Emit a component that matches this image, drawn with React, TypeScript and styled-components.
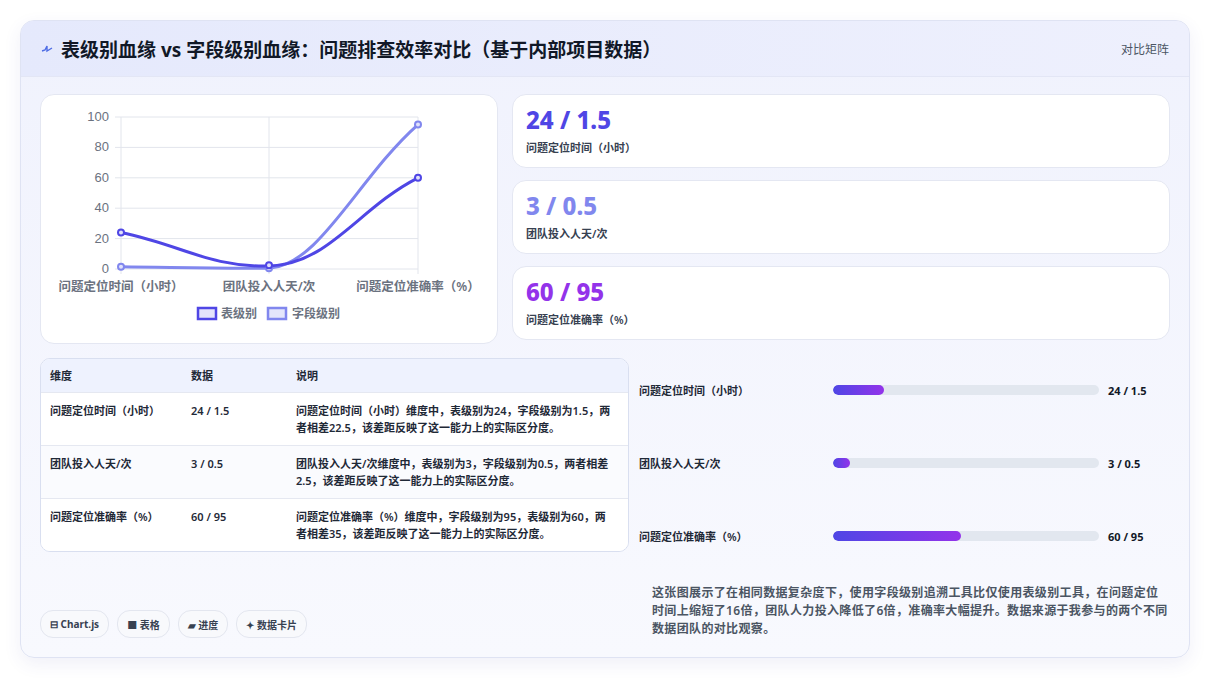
import React from 'react';
import styled, { createGlobalStyle } from 'styled-components';

const Global = createGlobalStyle`
  body { margin: 0; background: #fff; font-family: "Noto Sans", "Noto Sans CJK SC", sans-serif; }
`;

const Page = styled.div`
  padding: 20px 20px 22px 20px;
  background: #fff;
`;

const Card = styled.div`
  border: 1px solid #dfe3f3;
  border-radius: 14px;
  background: linear-gradient(180deg, #f0f2fd 0%, #f8f9fe 100%);
  box-shadow: 0 6px 18px rgba(60, 70, 160, 0.08);
  overflow: hidden;
  height: 638px;
  box-sizing: border-box;
`;

const Header = styled.div`
  height: 55px;
  display: flex;
  align-items: center;
  justify-content: space-between;
  padding: 0 20px;
  background: linear-gradient(90deg, #e5e9fc, #eef0fd);
  border-bottom: 1px solid #e3e6f5;
`;

const Title = styled.h1`
  margin: 0;
  font-size: 19px;
  font-weight: 700;
  color: #111827;
  display: flex;
  align-items: center;
  gap: 8px;
`;

const Tag = styled.span`
  font-size: 12px;
  color: #4b5563;
`;

const Body = styled.div`
  padding: 17px 19px 0 19px;
  display: grid;
  grid-template-columns: 458px 1fr;
  column-gap: 14px;
`;

const Panel = styled.div`
  background: #fff;
  border: 1px solid #e4e7f2;
  border-radius: 14px;
`;

const ChartBox = styled(Panel)`
  height: 248px;
`;

const Stats = styled.div`
  display: flex;
  flex-direction: column;
  gap: 12px;
`;

const Stat = styled(Panel)`
  height: 74px;
  padding: 11px 13px 0;
  box-sizing: border-box;
`;

const StatValue = styled.div<{ $c: string }>`
  font-size: 24px;
  font-weight: 800;
  color: ${(p) => p.$c};
  line-height: 28px;
`;

const StatLabel = styled.div`
  font-size: 11px;
  font-weight: 600;
  color: #374151;
  margin-top: 5px;
`;

const Lower = styled.div`
  grid-column: 1 / 3;
  display: grid;
  grid-template-columns: 587px 1fr;
  column-gap: 12px;
  margin-top: 14px;
  height: 211px;
  align-items: start;
`;

const Table = styled.div`
  background: #fff;
  border: 1px solid #d9dff0;
  border-radius: 10px;
  overflow: hidden;
  width: 587px;
`;

const Row = styled.div<{ $head?: boolean; $alt?: boolean }>`
  display: grid;
  grid-template-columns: 141px 105px 1fr;
  padding: ${(p) => (p.$head ? '8px 14px 8px 9px' : '9px 14px 9px 9px')};
  background: ${(p) => (p.$head ? '#eef2fe' : p.$alt ? '#fafbfe' : '#fff')};
  border-top: ${(p) => (p.$head ? 'none' : '1px solid #e5e8f1')};
  font-size: 11px;
  font-weight: ${(p) => (p.$head ? 700 : 600)};
  color: #1f2937;
  line-height: 17px;
`;

const Bars = styled.div`
  display: flex;
  flex-direction: column;
  gap: 53px;
  padding-top: 22px;
`;

const BarRow = styled.div`
  display: grid;
  grid-template-columns: 185px 266px 1fr;
  align-items: center;
  column-gap: 9px;
  height: 20px;
  font-size: 11px;
  font-weight: 600;
  color: #1f2937;
`;

const Track = styled.div`
  height: 10px;
  border-radius: 5px;
  background: #e2e7ef;
  overflow: hidden;
`;

const Fill = styled.div`
  height: 100%;
  border-radius: 5px;
  background: linear-gradient(90deg, #4f46e5, #9333ea);
`;

const BarValue = styled.span`
  font-weight: 700;
  color: #111827;
`;

const Footer = styled.div`
  grid-column: 1 / 3;
  display: grid;
  grid-template-columns: 599px 1fr;
  margin-top: 15px;
  align-items: end;
`;

const Chips = styled.div`
  display: flex;
  gap: 8px;
`;

const Chip = styled.span`
  display: inline-flex;
  align-items: center;
  gap: 4px;
  height: 26px;
  padding: 0 9px;
  border-radius: 13px;
  border: 1px solid #e3e6ef;
  background: #f8f9fc;
  font-size: 10px;
  font-weight: 700;
  color: #374151;
`;

const Note = styled.p`
  margin: 0 0 0 13px;
  font-size: 12px;
  line-height: 18px;
  letter-spacing: 0.35px;
  color: #4b5563;
  font-weight: 600;
`;

const Chart = () => {
  const x0 = 80, x1 = 228, x2 = 377;
  const y = (v: number) => 174 - v * 1.52;
  const grid = [0, 20, 40, 60, 80, 100];
  const s1 = `M${x0},${y(24)} C${x0 + 60},${y(16)} ${x1 - 60},${y(1)} ${x1},${y(2)} C${x1 + 60},${y(3)} ${x2 - 60},${y(40)} ${x2},${y(60)}`;
  const s2 = `M${x0},${y(1.5)} C${x0 + 60},${y(1)} ${x1 - 60},${y(0.2)} ${x1},${y(0.5)} C${x1 + 50},${y(2)} ${x2 - 60},${y(60)} ${x2},${y(95)}`;
  return (
    <svg width="458" height="248" viewBox="0 0 458 248">
      {grid.map((g) => (
        <g key={g}>
          <line x1={74} x2={x2} y1={y(g)} y2={y(g)} stroke="#e2e5ec" />
          <text x={68} y={y(g) + 4} textAnchor="end" fontSize="13" fill="#6b7280" fontFamily="Liberation Sans, sans-serif">{g}</text>
        </g>
      ))}
      {[x0, x1, x2].map((x) => (
        <line key={x} x1={x} x2={x} y1={y(100)} y2={y(0) + 5} stroke="#e2e5ec" />
      ))}
      <path d={s2} fill="none" stroke="#8187ee" strokeWidth="3" />
      <path d={s1} fill="none" stroke="#4f46e5" strokeWidth="3" />
      {[[x0, 1.5], [x1, 0.5], [x2, 95]].map(([a, b]) => (
        <circle key={'b' + a} cx={a} cy={y(b)} r="3" fill="#e0e2fb" stroke="#8187ee" strokeWidth="2" />
      ))}
      {[[x0, 24], [x1, 2.5], [x2, 60]].map(([a, b]) => (
        <circle key={'a' + a} cx={a} cy={y(b)} r="3" fill="#e0e0fa" stroke="#4f46e5" strokeWidth="2" />
      ))}
      {[[x0, '问题定位时间（小时）'], [x1, '团队投入人天/次'], [x2, '问题定位准确率（%）']].map(([a, t]) => (
        <text key={t as string} x={a as number} y={196} textAnchor="middle" fontSize="12.5" fill="#6b7280" fontWeight="600">{t}</text>
      ))}
      <rect x={157} y={213} width={18} height={11} fill="#e4e3fb" stroke="#4f46e5" strokeWidth="2.5" />
      <text x={180} y={223} fontSize="12" fill="#6b7280" fontWeight="600">表级别</text>
      <rect x={227} y={213} width={18} height={11} fill="#e4e6fb" stroke="#8187ee" strokeWidth="2.5" />
      <text x={251} y={223} fontSize="12" fill="#6b7280" fontWeight="600">字段级别</text>
    </svg>
  );
};

const rows = [
  ['问题定位时间（小时）', '24 / 1.5', '问题定位时间（小时）维度中，表级别为24，字段级别为1.5，两者相差22.5，该差距反映了这一能力上的实际区分度。'],
  ['团队投入人天/次', '3 / 0.5', '团队投入人天/次维度中，表级别为3，字段级别为0.5，两者相差2.5，该差距反映了这一能力上的实际区分度。'],
  ['问题定位准确率（%）', '60 / 95', '问题定位准确率（%）维度中，字段级别为95，表级别为60，两者相差35，该差距反映了这一能力上的实际区分度。'],
];

const bars: [string, number, string][] = [
  ['问题定位时间（小时）', 19, '24 / 1.5'],
  ['团队投入人天/次', 6.5, '3 / 0.5'],
  ['问题定位准确率（%）', 48, '60 / 95'],
];

export default function App() {
  return (
    <Page>
      <Global />
      <Card>
        <Header>
          <Title>
            <svg width="12" height="10" viewBox="0 0 12 10"><path d="M1 7 L4 6 L6 2 L6 7 L11 4" fill="none" stroke="#4f6de5" strokeWidth="1.4" /></svg>
            表级别血缘 vs 字段级别血缘：问题排查效率对比（基于内部项目数据）
          </Title>
          <Tag>对比矩阵</Tag>
        </Header>
        <Body>
          <ChartBox><Chart /></ChartBox>
          <Stats>
            <Stat><StatValue $c="#4f46e5">24 / 1.5</StatValue><StatLabel>问题定位时间（小时）</StatLabel></Stat>
            <Stat><StatValue $c="#8187ee">3 / 0.5</StatValue><StatLabel>团队投入人天/次</StatLabel></Stat>
            <Stat><StatValue $c="#9333ea">60 / 95</StatValue><StatLabel>问题定位准确率（%）</StatLabel></Stat>
          </Stats>
          <Lower>
            <Table>
              <Row $head><span>维度</span><span>数据</span><span>说明</span></Row>
              {rows.map((r, i) => (
                <Row key={r[0]} $alt={i === 1}><span>{r[0]}</span><span>{r[1]}</span><span>{r[2]}</span></Row>
              ))}
            </Table>
            <Bars>
              {bars.map(([l, w, v]) => (
                <BarRow key={l}>
                  <span>{l}</span>
                  <Track><Fill style={{ width: `${w}%` }} /></Track>
                  <BarValue>{v}</BarValue>
                </BarRow>
              ))}
            </Bars>
          </Lower>
          <Footer>
            <Chips>
              <Chip>⊟ Chart.js</Chip>
              <Chip>■ 表格</Chip>
              <Chip>▰ 进度</Chip>
              <Chip>✦ 数据卡片</Chip>
            </Chips>
            <Note>这张图展示了在相同数据复杂度下，使用字段级别追溯工具比仅使用表级别工具，在问题定位时间上缩短了16倍，团队人力投入降低了6倍，准确率大幅提升。数据来源于我参与的两个不同数据团队的对比观察。</Note>
          </Footer>
        </Body>
      </Card>
    </Page>
  );
}
